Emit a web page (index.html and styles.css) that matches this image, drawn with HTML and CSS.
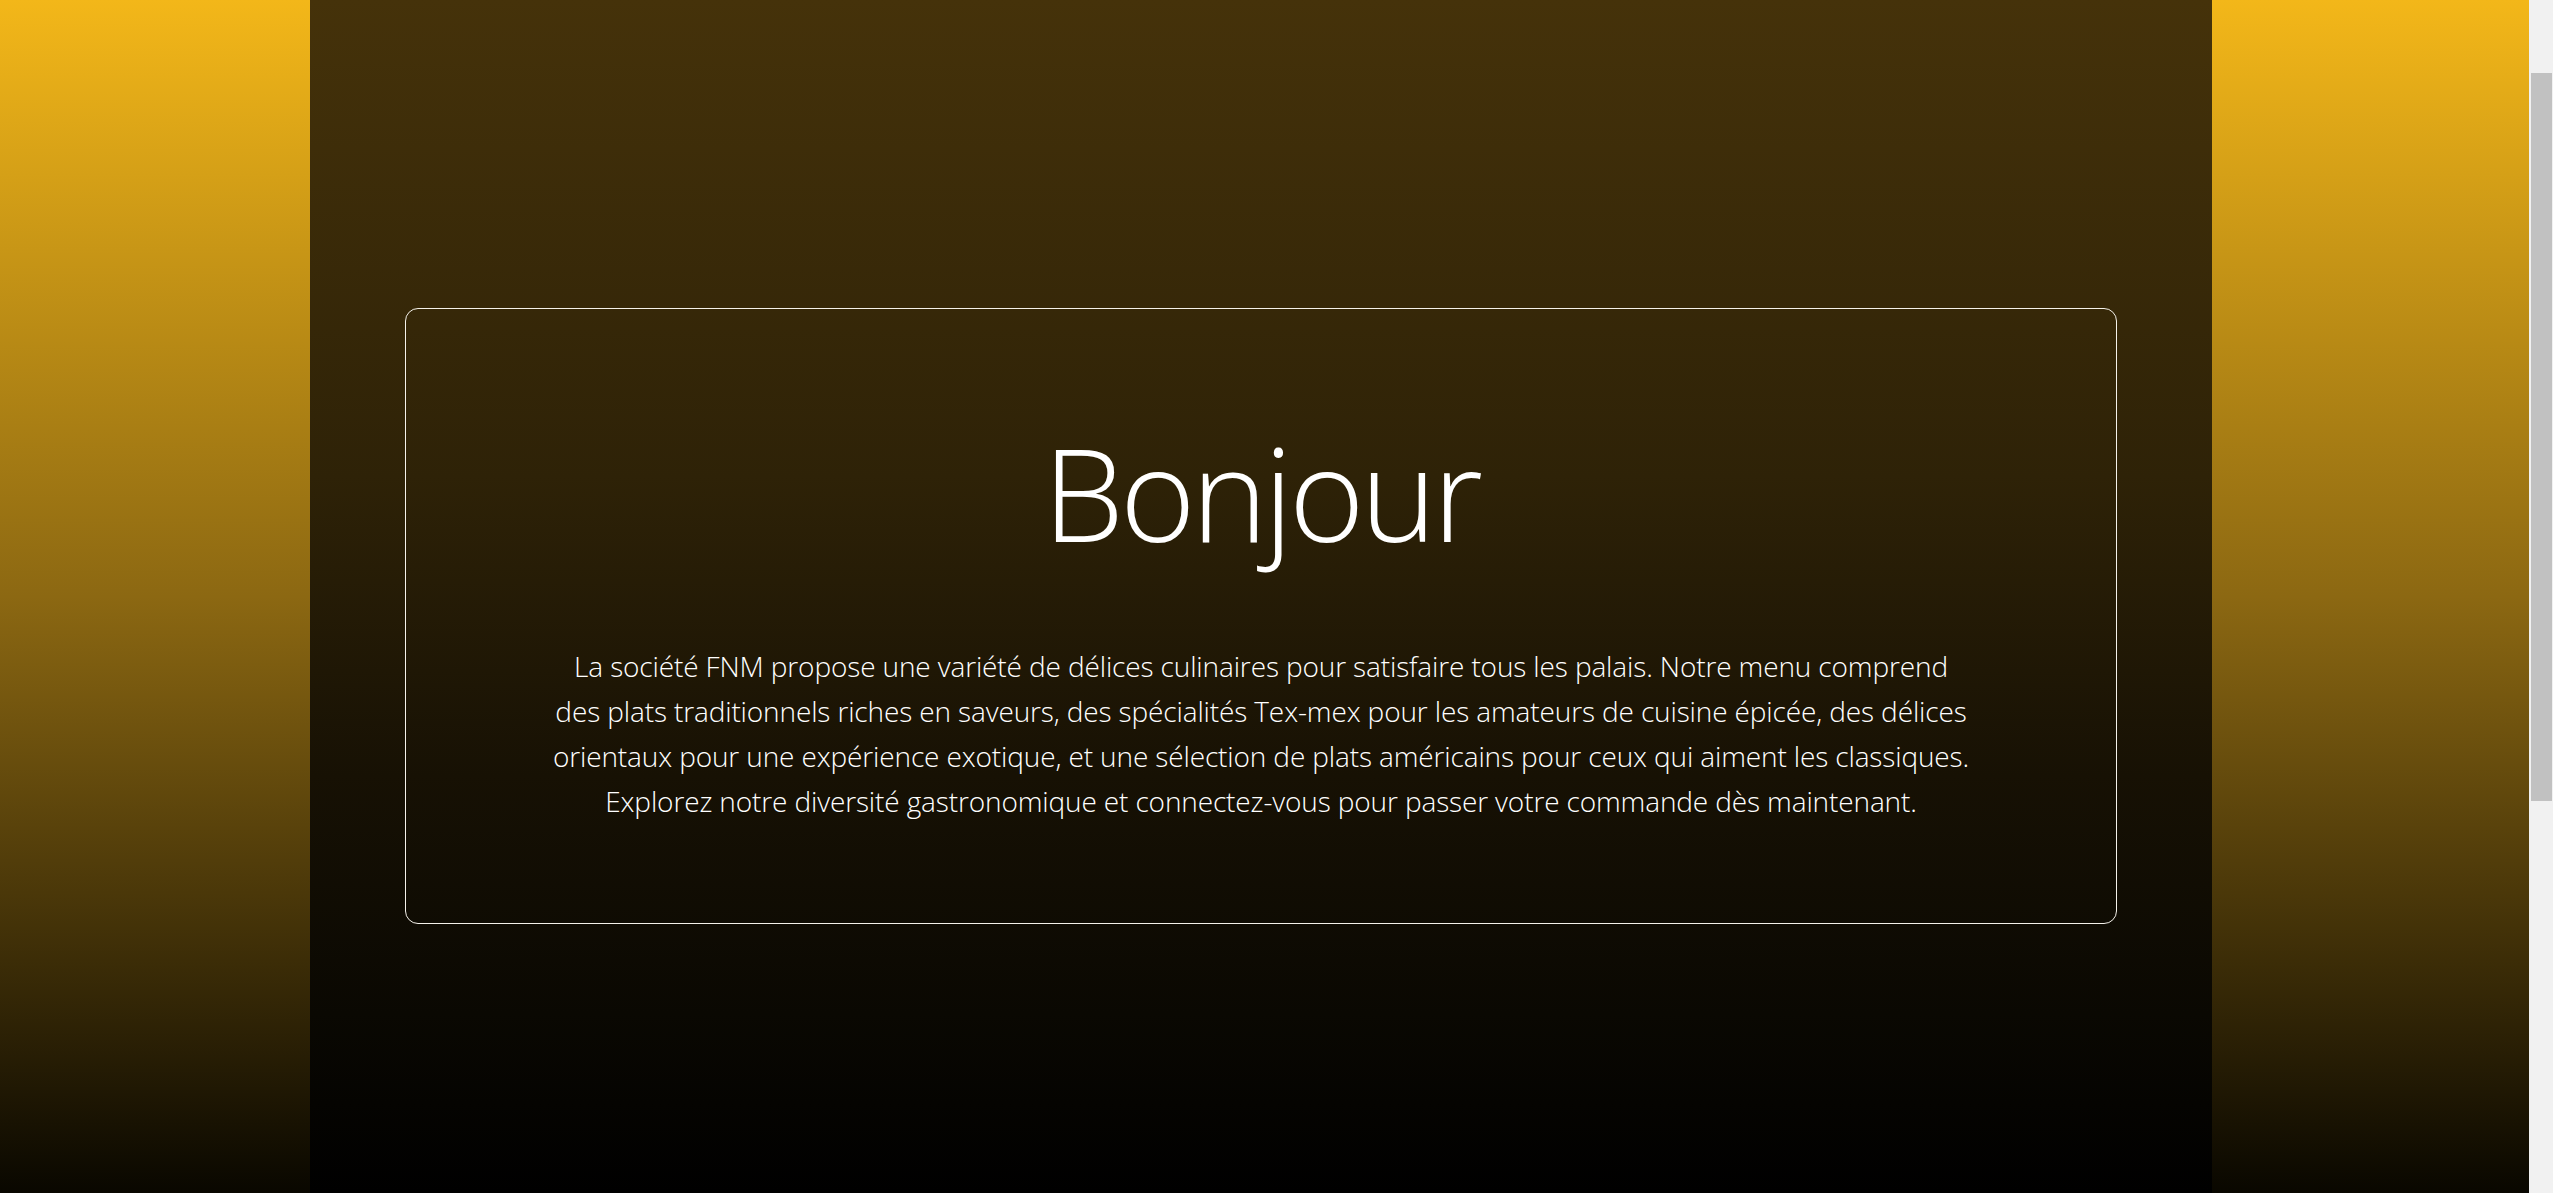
FILE: index.html
```html
<!DOCTYPE html>
<html lang="fr">
<head>
<meta charset="utf-8">
<title>FNM</title>
<link rel="stylesheet" href="styles.css">
</head>
<body>
<div class="window">
  <main class="page">
    <section class="center">
      <div class="card">
        <h1 class="title">Bonjour</h1>
        <p class="intro">La société FNM propose une variété de délices culinaires pour satisfaire tous les palais. Notre menu comprend<br>des plats traditionnels riches en saveurs, des spécialités Tex-mex pour les amateurs de cuisine épicée, des délices<br>orientaux pour une expérience exotique, et une sélection de plats américains pour ceux qui aiment les classiques.<br>Explorez notre diversité gastronomique et connectez-vous pour passer votre commande dès maintenant.</p>
      </div>
    </section>
  </main>
  <div class="scrollbar"><div class="thumb"></div></div>
</div>
</body>
</html>
```

FILE: styles.css
```css
html, body {
  margin: 0;
  padding: 0;
  height: 100%;
  overflow: hidden;
}
body {
  font-family: "Open Sans", "Noto Sans", "Liberation Sans", sans-serif;
  font-weight: 300;
  color: #ffffff;
}
.window {
  display: flex;
  height: 1193px;
}
.page {
  flex: 1;
  display: flex;
  background: linear-gradient(to bottom, #f3b719 0%, #8c6812 50%, #090700 100%);
}
.center {
  margin-left: 310px;
  width: 1902px;
  padding-top: 308px;
  box-sizing: border-box;
  background: linear-gradient(to bottom, #45320a 0%, #2e2207 40%, #171104 65%, #0a0802 85%, #000000 100%);
  display: flex;
  justify-content: center;
  align-items: flex-start;
}
.card {
  width: 1712px;
  box-sizing: border-box;
  border: 1.5px solid #f4f1ea;
  border-radius: 13px;
  padding: 107px 100px 99px;
  text-align: center;
}
.title {
  margin: 0;
  font-size: 129px;
  font-weight: 300;
  line-height: 153.6px;
  letter-spacing: -4px;
}
.intro {
  margin: 74px 0 0;
  font-size: 28px;
  line-height: 45px;
  letter-spacing: -0.13px;
  white-space: nowrap;
}
.scrollbar {
  width: 24px;
  background: #f1f1f1;
  display: flex;
  flex-direction: column;
}
.thumb {
  margin: 73px 1px 0 2px;
  height: 728px;
  background: #c1c1c1;
}
```
